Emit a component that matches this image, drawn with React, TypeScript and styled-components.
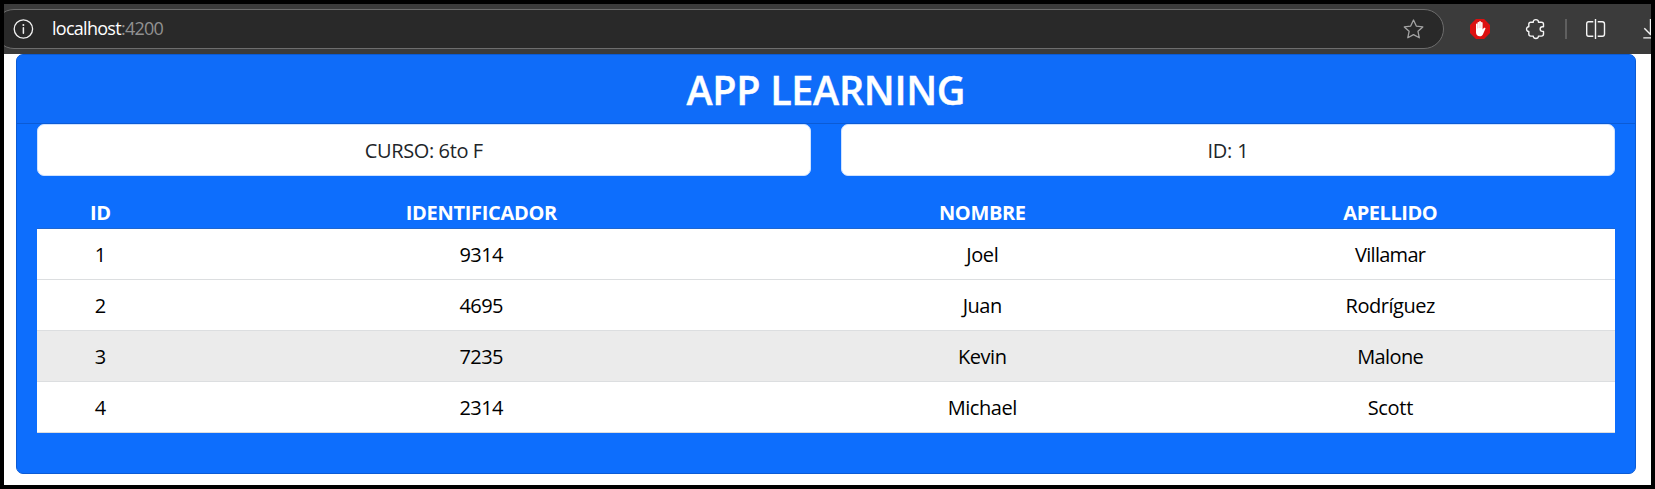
import React from 'react';
import styled, { createGlobalStyle } from 'styled-components';

const GlobalStyle = createGlobalStyle`
  *, *::before, *::after { box-sizing: border-box; }
  body { margin: 0; background: #000; font-family: "Open Sans", sans-serif; }
`;

const Frame = styled.div`
  width: 1655px;
  height: 489px;
  padding: 4px;
  background: #000;
  overflow: hidden;
`;

const Viewport = styled.div`
  height: 481px;
  background: #fff;
  overflow: hidden;
`;

const BrowserBar = styled.header`
  display: flex;
  align-items: center;
  height: 50px;
  background: #3b3b3b;
  overflow: hidden;
`;

const AddressBar = styled.div`
  display: flex;
  flex: none;
  align-items: center;
  justify-content: space-between;
  width: 1450px;
  height: 40px;
  margin-left: -10px;
  padding: 0 20px 0 18px;
  border: 1px solid #6d6d6d;
  border-radius: 20px;
  background: #292929;
`;

const Address = styled.div`
  display: flex;
  align-items: center;
  font-size: 18px;
  line-height: 24px;
`;

const AddressText = styled.span`
  display: flex;
  margin: -2px 0 0 19px;
`;

const Host = styled.span`
  color: #fff;
  letter-spacing: -0.72px;
`;

const Port = styled.span`
  color: #919191;
  letter-spacing: -0.75px;
`;

const BarIcons = styled.div`
  display: flex;
  flex: none;
  align-items: center;
  height: 24px;
  margin-left: 26px;
`;

const Icon = styled.svg<{ $gap?: number }>`
  display: block;
  flex: none;
  overflow: visible;
  margin-left: ${({ $gap = 0 }) => $gap}px;
`;

const Separator = styled.span`
  width: 2px;
  height: 20px;
  margin-left: 20px;
  background: #5f5f5f;
`;

const Card = styled.main`
  width: 1620px;
  height: 420px;
  margin-left: 12px;
  border: 1px solid #0b5bd5;
  border-radius: 7px;
  background: #0d6efd;
`;

const CardHeader = styled.div`
  height: 69px;
  padding-top: 7px;
  border-bottom: 1px solid #0b5bd5;
  border-radius: 6px 6px 0 0;
  background: #0f6cf9;
  text-align: center;
`;

const Title = styled.h1`
  margin: 0;
  color: #fff;
  font-size: 39.5px;
  font-weight: 600;
  line-height: 56px;
  -webkit-text-stroke: 0.4px #fff;
`;

const CardBody = styled.div`
  padding: 0 20px;
`;

const Summary = styled.div`
  display: grid;
  grid-template-columns: 774px 774px;
  column-gap: 30px;
`;

const SummaryBox = styled.div`
  height: 52px;
  border: 1px solid #cfe2ff;
  border-radius: 7px;
  background: #fff;
  color: #212529;
  font-size: 20px;
  line-height: 52px;
  text-align: center;
`;

const Table = styled.table`
  width: 1578px;
  margin-top: 22px;
  table-layout: fixed;
  border-collapse: separate;
  border-spacing: 0;
  font-size: 20px;
  text-align: center;
`;

const HeadCell = styled.th`
  height: 31px;
  padding: 0 0 1px;
  border-bottom: 1px solid #1f66cf;
  color: #fff;
  font-weight: 700;
  line-height: 29px;
`;

const Row = styled.tr<{ $active?: boolean }>`
  background: ${({ $active }) => ($active ? '#ebebeb' : '#fff')};
`;

const Cell = styled.td`
  height: 51px;
  padding: 1px 0 0;
  border-bottom: 1px solid #dcdee0;
  color: #000;
  line-height: 49px;
`;

/* Tracked text; the negative margin keeps it centred without the trailing gap. */
const Tracked = styled.span<{ $by: number }>`
  letter-spacing: ${({ $by }) => $by}px;
  margin-right: ${({ $by }) => -$by}px;
`;

type Entry = [text: string, tracking: number];

const widths = [127, 635, 367, 449];

const headings: Entry[] = [
  ['ID', -0.2],
  ['IDENTIFICADOR', -0.3],
  ['NOMBRE', -0.35],
  ['APELLIDO', -0.44],
];

const students: { active?: boolean; cells: Entry[] }[] = [
  { cells: [['1', 0], ['9314', -0.6], ['Joel', -0.4], ['Villamar', -0.72]] },
  { cells: [['2', 0], ['4695', -0.6], ['Juan', -0.5], ['Rodríguez', -0.46]] },
  { active: true, cells: [['3', 0], ['7235', -0.6], ['Kevin', -0.5], ['Malone', -0.6]] },
  { cells: [['4', 0], ['2314', -0.6], ['Michael', -0.45], ['Scott', -0.3]] },
];

const InfoIcon = () => (
  <Icon width="20" height="20" viewBox="0 0 20 20" fill="none" stroke="#f2f2f2" strokeWidth="1.3">
    <circle cx="10.4" cy="10" r="9.2" />
    <path d="M10.4 8.8v5.4" strokeWidth="1.5" strokeLinecap="round" />
    <circle cx="10.4" cy="6" r="1" fill="#f2f2f2" stroke="none" />
  </Icon>
);

const StarIcon = () => (
  <Icon width="20" height="20" viewBox="0 0 20 20" fill="none" stroke="#a3a3a3" strokeWidth="1.3" strokeLinejoin="round">
    <path d="M10.5 1l2.8 6.1 6.5.8-4.8 4.4 1.3 6.5-5.8-3.2-5.7 3.2 1.3-6.5L1.3 7.9l6.4-.8z" />
  </Icon>
);

const BlockerIcon = () => (
  <Icon width="20" height="20" viewBox="0 0 20 20">
    <path d="M5.9 0h8.2L20 5.9v8.2L14.1 20H5.9L0 14.1V5.9z" fill="#dc1010" />
    <path
      d="M6 10.7V5.2c0-1 1.5-1 1.5 0V3.7c0-1.1 1.7-1.1 1.7 0v-.9c0-1.1 1.7-1.1 1.7 0v1.1c0-1.1 1.7-1.1 1.7 0v6.6l1.2-1.5c.7-.8 2-.2 1.6.7l-2.3 5.2c-.7 1.5-1.7 2.3-3.2 2.3-2.4 0-3.9-1.5-3.9-3.8z"
      fill="#fff"
    />
    <path d="M7.5 5v4.5M9.2 4v5M10.9 4v5" stroke="#e88" strokeWidth=".35" />
  </Icon>
);

const PuzzleIcon = () => (
  <Icon $gap={36} width="19" height="20" viewBox="0 0 19 20" fill="none" stroke="#f5f5f5" strokeWidth="1.4" strokeLinejoin="round">
    <path d="M4.8 3.2h2.5C6.7-.2 12.9-.2 12.4 3.2h3.1c1.2 0 2 .8 2 2v2.6h-1.1c-3 0-3 4.6 0 4.6h1.1v2.7c0 1.2-.8 2-2 2h-3.1c.4 3.2-5.4 3.2-5.1 0H4.8c-1.2 0-2-.8-2-2v-2.7c-3 .2-3-4.9 0-4.6V5.2c0-1.2.8-2 2-2z" />
  </Icon>
);

const SplitIcon = () => (
  <Icon $gap={19} width="20" height="20" viewBox="0 0 20 20" fill="none" stroke="#f5f5f5" strokeWidth="1.4">
    <path d="M7.3 2.7H2.6C1.4 2.7.7 3.5.7 4.9v10.2c0 1.4.7 2.2 1.9 2.2h4.7M11.7 2.7h4.6c1.4 0 2.2.8 2.2 2.2v10.2c0 1.4-.8 2.2-2.2 2.2h-4.6M9.5 0v20" />
  </Icon>
);

const DownloadIcon = () => (
  <Icon $gap={37} width="18" height="20" viewBox="0 0 18 20" fill="none" stroke="#f5f5f5" strokeWidth="1.4">
    <path d="M7.5 0v15.5M1.3 9.2l6.2 6.3 6.2-6.3M.3 18.9h15" />
  </Icon>
);

export default function App() {
  return (
    <>
      <GlobalStyle />
      <Frame>
        <Viewport>
          <BrowserBar>
            <AddressBar>
              <Address>
                <InfoIcon />
                <AddressText>
                  <Host>localhost</Host>
                  <Port>:4200</Port>
                </AddressText>
              </Address>
              <StarIcon />
            </AddressBar>
            <BarIcons>
              <BlockerIcon />
              <PuzzleIcon />
              <Separator />
              <SplitIcon />
              <DownloadIcon />
            </BarIcons>
          </BrowserBar>
          <Card>
            <CardHeader>
              <Title>
                <Tracked $by={-0.31}>APP LEARNING</Tracked>
              </Title>
            </CardHeader>
            <CardBody>
              <Summary>
                <SummaryBox>
                  <Tracked $by={-0.39}>CURSO: 6to F</Tracked>
                </SummaryBox>
                <SummaryBox>
                  <Tracked $by={-0.2}>ID: 1</Tracked>
                </SummaryBox>
              </Summary>
              <Table>
                <colgroup>
                  {widths.map((width) => (
                    <col key={width} width={width} />
                  ))}
                </colgroup>
                <thead>
                  <tr>
                    {headings.map(([text, tracking]) => (
                      <HeadCell key={text}>
                        <Tracked $by={tracking}>{text}</Tracked>
                      </HeadCell>
                    ))}
                  </tr>
                </thead>
                <tbody>
                  {students.map(({ active, cells }) => (
                    <Row key={cells[0][0]} $active={active}>
                      {cells.map(([text, tracking]) => (
                        <Cell key={text}>
                          <Tracked $by={tracking}>{text}</Tracked>
                        </Cell>
                      ))}
                    </Row>
                  ))}
                </tbody>
              </Table>
            </CardBody>
          </Card>
        </Viewport>
      </Frame>
    </>
  );
}
